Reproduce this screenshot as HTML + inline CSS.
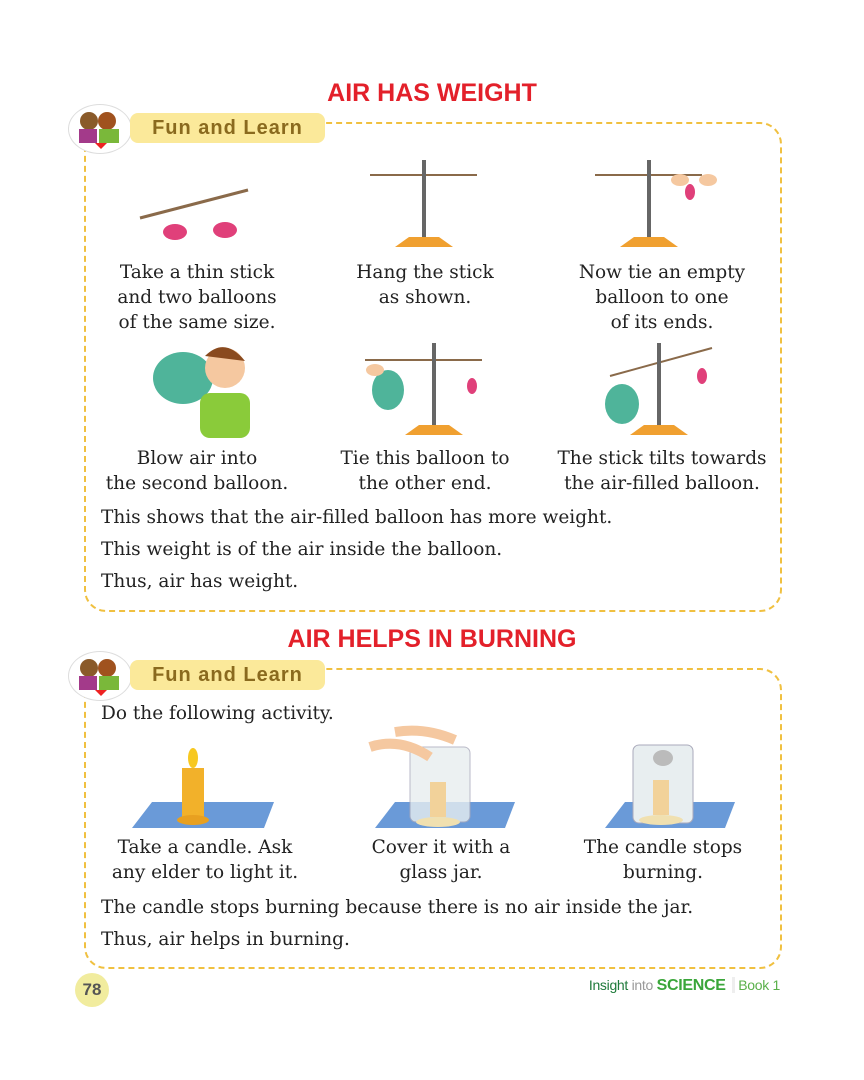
<!DOCTYPE html>
<html><head><meta charset="utf-8"><style>
body{margin:0;width:864px;height:1080px;background:#fff;position:relative;font-family:"DejaVu Serif",serif;color:#222;overflow:hidden}
.abs{position:absolute}
.title{position:absolute;left:0;width:864px;text-align:center;font-family:"Liberation Sans",sans-serif;font-weight:bold;color:#e3202a;font-size:25px}
.box{position:absolute;left:84px;width:694px;border:2px dashed #f0c040;border-radius:22px}
.pill{position:absolute;left:130px;width:195px;height:30px;background:#fbe99a;border-radius:8px;font-family:"Liberation Sans",sans-serif;font-weight:bold;color:#8a6a1e;font-size:20px;line-height:30px;text-align:center;letter-spacing:1px}
.kids{position:absolute;left:68px;width:62px;height:48px;border-radius:50%;border:1px solid #ddd;background:#fff}
.cap{position:absolute;text-align:center;font-size:18.5px;line-height:25px;width:250px;white-space:nowrap}
.p{position:absolute;left:101px;font-size:18.5px;white-space:nowrap}
</style></head><body>
<div class="title" style="top:79px">AIR HAS WEIGHT</div>
<div class="box" style="top:122px;height:486px"></div>
<div class="kids" style="top:104px"><svg width="62" height="48"><circle cx="20" cy="16" r="9" fill="#8a5a2a"/><circle cx="38" cy="16" r="9" fill="#a0521e"/><rect x="10" y="24" width="18" height="14" fill="#a33a8a"/><rect x="30" y="24" width="20" height="14" fill="#7ab83a"/><path d="M26 38l6 6 6-6z" fill="#e22"/></svg></div>
<div class="pill" style="top:113px">Fun and Learn</div>

<svg class="abs" style="left:130px;top:180px" width="130" height="70"><line x1="10" y1="38" x2="118" y2="10" stroke="#8a6a4a" stroke-width="3"/><ellipse cx="45" cy="52" rx="12" ry="8" fill="#e0407a"/><ellipse cx="95" cy="50" rx="12" ry="8" fill="#e0407a"/></svg>
<svg class="abs" style="left:365px;top:150px" width="120" height="100"><line x1="5" y1="25" x2="112" y2="25" stroke="#8a6a4a" stroke-width="2"/><rect x="57" y="10" width="4" height="85" fill="#666"/><path d="M30 97l14-10h30l14 10z" fill="#f0a030"/></svg>
<svg class="abs" style="left:590px;top:150px" width="140" height="100"><line x1="5" y1="25" x2="112" y2="25" stroke="#8a6a4a" stroke-width="2"/><rect x="57" y="10" width="4" height="85" fill="#666"/><path d="M30 97l14-10h30l14 10z" fill="#f0a030"/><ellipse cx="100" cy="42" rx="5" ry="8" fill="#e0407a"/><ellipse cx="90" cy="30" rx="9" ry="6" fill="#f5c8a0"/><ellipse cx="118" cy="30" rx="9" ry="6" fill="#f5c8a0"/></svg>
<div class="cap" style="left:72px;top:260px">Take a thin stick<br>and two balloons<br>of the same size.</div>
<div class="cap" style="left:300px;top:260px">Hang the stick<br>as shown.</div>
<div class="cap" style="left:537px;top:260px">Now tie an empty<br>balloon to one<br>of its ends.</div>

<svg class="abs" style="left:145px;top:338px" width="110" height="100"><ellipse cx="38" cy="40" rx="30" ry="26" fill="#4fb49a"/><circle cx="80" cy="30" r="20" fill="#f5c8a0"/><path d="M60 18q20-20 40 5" fill="#8a4a1e"/><rect x="55" y="55" width="50" height="45" rx="10" fill="#8acb3a"/></svg>
<svg class="abs" style="left:360px;top:338px" width="130" height="100"><line x1="5" y1="22" x2="122" y2="22" stroke="#8a6a4a" stroke-width="2"/><rect x="72" y="5" width="4" height="90" fill="#666"/><path d="M45 97l14-10h30l14 10z" fill="#f0a030"/><ellipse cx="28" cy="52" rx="16" ry="20" fill="#4fb49a"/><ellipse cx="112" cy="48" rx="5" ry="8" fill="#e0407a"/><ellipse cx="15" cy="32" rx="9" ry="6" fill="#f5c8a0"/></svg>
<svg class="abs" style="left:600px;top:338px" width="120" height="100"><line x1="10" y1="38" x2="112" y2="10" stroke="#8a6a4a" stroke-width="2"/><rect x="57" y="5" width="4" height="90" fill="#666"/><path d="M30 97l14-10h30l14 10z" fill="#f0a030"/><ellipse cx="22" cy="66" rx="17" ry="20" fill="#4fb49a"/><ellipse cx="102" cy="38" rx="5" ry="8" fill="#e0407a"/></svg>
<div class="cap" style="left:72px;top:446px">Blow air into<br>the second balloon.</div>
<div class="cap" style="left:300px;top:446px">Tie this balloon to<br>the other end.</div>
<div class="cap" style="left:537px;top:446px">The stick tilts towards<br>the air-filled balloon.</div>
<div class="p" style="top:507px">This shows that the air-filled balloon has more weight.</div>
<div class="p" style="top:539px">This weight is of the air inside the balloon.</div>
<div class="p" style="top:571px">Thus, air has weight.</div>

<div class="title" style="top:625px">AIR HELPS IN BURNING</div>
<div class="box" style="top:668px;height:297px"></div>
<div class="kids" style="top:651px"><svg width="62" height="48"><circle cx="20" cy="16" r="9" fill="#8a5a2a"/><circle cx="38" cy="16" r="9" fill="#a0521e"/><rect x="10" y="24" width="18" height="14" fill="#a33a8a"/><rect x="30" y="24" width="20" height="14" fill="#7ab83a"/><path d="M26 38l6 6 6-6z" fill="#e22"/></svg></div>
<div class="pill" style="top:660px">Fun and Learn</div>
<div class="p" style="top:703px">Do the following activity.</div>

<svg class="abs" style="left:120px;top:740px" width="155" height="92"><path d="M12 88l20-26h122l-10 26z" fill="#6a9ad8"/><rect x="62" y="28" width="22" height="50" fill="#f2b12a"/><ellipse cx="73" cy="80" rx="16" ry="5" fill="#e8a020"/><ellipse cx="73" cy="18" rx="5" ry="10" fill="#f7c820"/></svg>
<svg class="abs" style="left:365px;top:722px" width="160" height="110"><path d="M10 106l20-26h120l-10 26z" fill="#6a9ad8"/><rect x="45" y="25" width="60" height="75" rx="6" fill="#e8eef0" stroke="#aab" opacity=".8"/><rect x="65" y="60" width="16" height="35" fill="#f2d29a"/><ellipse cx="73" cy="100" rx="22" ry="5" fill="#f0e0b0"/><path d="M5 25q30-10 60 10M30 10q30-5 60 8" stroke="#f5c8a0" stroke-width="10" fill="none"/></svg>
<svg class="abs" style="left:595px;top:740px" width="140" height="92"><path d="M10 88l20-26h110l-10 26z" fill="#6a9ad8"/><rect x="38" y="5" width="60" height="78" rx="6" fill="#e8eef0" stroke="#aab"/><rect x="58" y="40" width="16" height="35" fill="#f2d29a"/><ellipse cx="66" cy="80" rx="22" ry="5" fill="#f0e0b0"/><ellipse cx="68" cy="18" rx="10" ry="8" fill="#bbb"/></svg>
<div class="cap" style="left:80px;top:835px">Take a candle. Ask<br>any elder to light it.</div>
<div class="cap" style="left:316px;top:835px">Cover it with a<br>glass jar.</div>
<div class="cap" style="left:538px;top:835px">The candle stops<br>burning.</div>
<div class="p" style="top:897px">The candle stops burning because there is no air inside the jar.</div>
<div class="p" style="top:929px">Thus, air helps in burning.</div>

<div class="abs" style="left:75px;top:973px;width:34px;height:34px;border-radius:50%;background:#f1ec9e;font-family:'Liberation Sans',sans-serif;font-weight:bold;color:#555;font-size:17px;line-height:34px;text-align:center">78</div>
<div class="abs" style="left:580px;top:977px;width:200px;text-align:right;font-family:'Liberation Sans',sans-serif;font-size:14px;color:#2a8a3a;white-space:nowrap;letter-spacing:-0.3px"><span style="color:#1e7a3a">Insight</span> <span style="color:#999">into</span> <b style="color:#3aa63a;font-size:16px">SCIENCE</b> <span style="border-left:3px solid #eee;margin:0 3px"></span> <span style="color:#5ab04a">Book 1</span></div>
</body></html>
